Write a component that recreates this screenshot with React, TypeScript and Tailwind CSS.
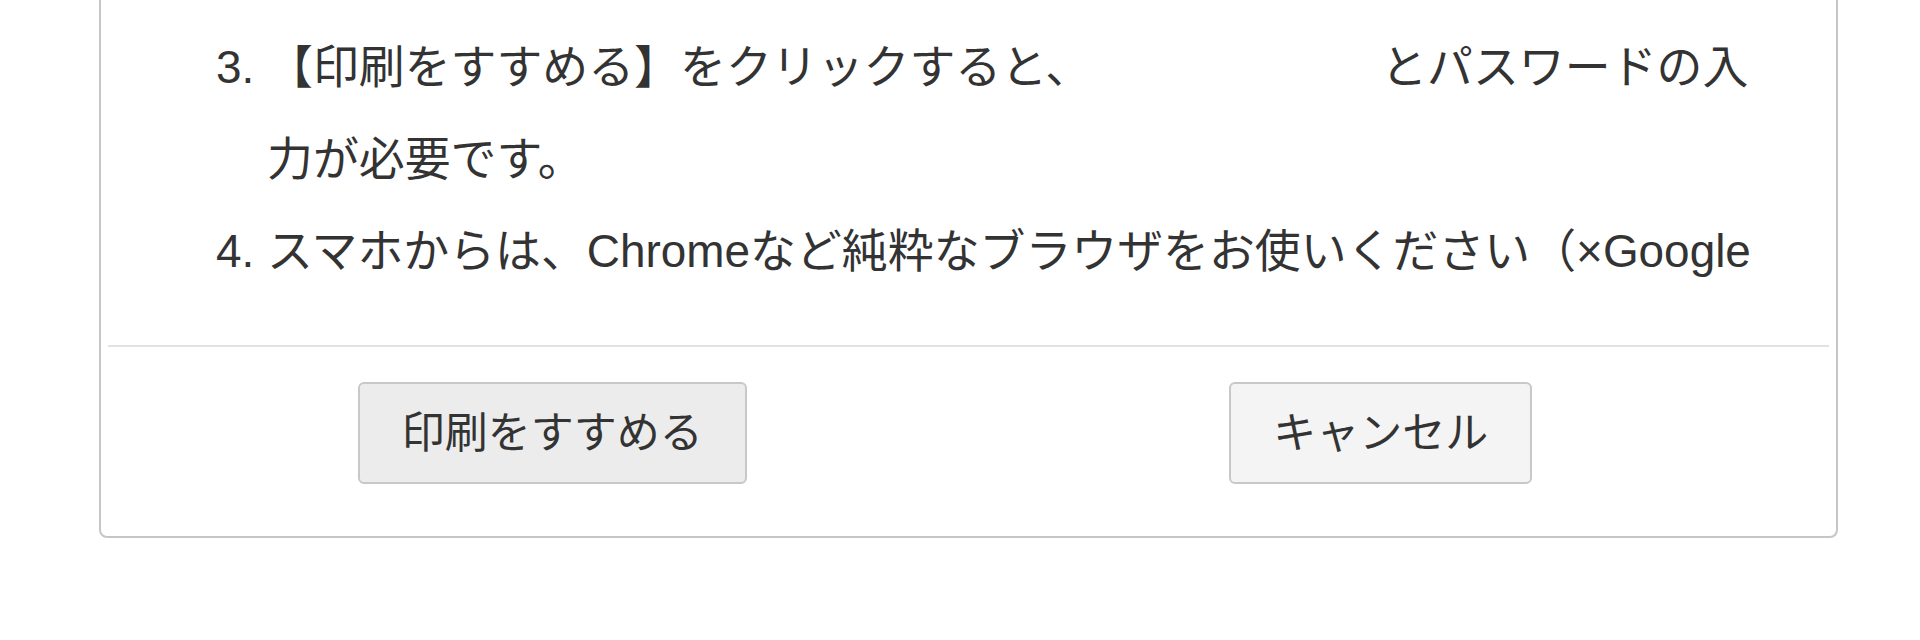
import React from 'react';

const font = { fontFamily: '"Liberation Sans", "Noto Sans CJK JP", sans-serif' };

function Notes() {
  return (
    <ol start={3} className="list-decimal pl-[159px] pr-[40px] pt-[29px] pb-[48px] text-[45.9px] leading-[92px] text-[#333]">
      <li>
        【印刷をすすめる】をクリックすると、
        <span className="inline-block w-[290px]" />
        とパスワードの入力が必要です。
      </li>
      <li>スマホからは、Chromeなど純粋なブラウザをお使いください（×Google</li>
    </ol>
  );
}

export default function App() {
  return (
    <div className="min-h-[640px] overflow-hidden bg-white" style={font}>
      <div className="ml-[99px] -mt-[10px] w-[1739px] rounded-[8px] border-2 border-[#c6c6c6] bg-white px-[7px]">
        <Notes />
        <div className="grid grid-cols-2 border-t-2 border-[#e2e2e2] pl-[30px] pr-[34px] pt-[35px] pb-[52px]">
          <div className="flex justify-center">
            <button className="rounded-[6px] border-2 border-[#c8c8c8] bg-[#ececec] px-[42px] py-[19px] text-[43px] leading-[60px] text-[#333]">
              印刷をすすめる
            </button>
          </div>
          <div className="flex justify-center">
            <button className="rounded-[6px] border-2 border-[#c8c8c8] bg-[#f4f4f4] px-[42px] py-[19px] text-[43px] leading-[60px] text-[#333]">
              キャンセル
            </button>
          </div>
        </div>
      </div>
    </div>
  );
}
